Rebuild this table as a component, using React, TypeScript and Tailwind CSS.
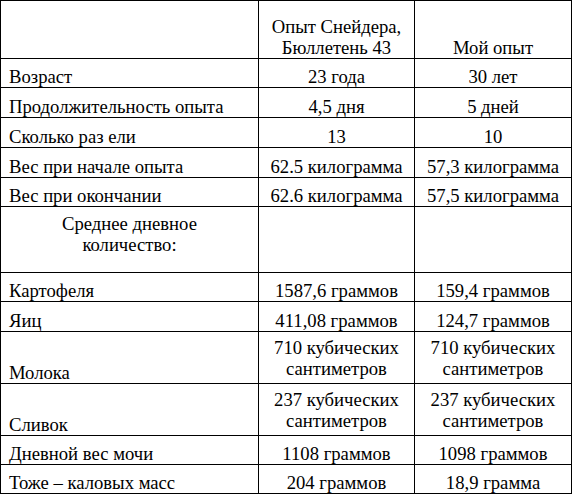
type R = { label: string; a: string[]; b: string[]; h: string; mid?: boolean };

const rows: R[] = [
  { label: "Возраст", a: ["23 года"], b: ["30 лет"], h: "h-[29px]" },
  { label: "Продолжительность опыта", a: ["4,5 дня"], b: ["5 дней"], h: "h-[30px]" },
  { label: "Сколько раз ели", a: ["13"], b: ["10"], h: "h-[30px]" },
  { label: "Вес при начале опыта", a: ["62.5 килограмма"], b: ["57,3 килограмма"], h: "h-[30px]" },
  { label: "Вес при окончании", a: ["62.6 килограмма"], b: ["57,5 килограмма"], h: "h-[29px]" },
];

const rows2: R[] = [
  { label: "Картофеля", a: ["1587,6 граммов"], b: ["159,4 граммов"], h: "h-[29px]" },
  { label: "Яиц", a: ["411,08 граммов"], b: ["124,7 граммов"], h: "h-[30px]" },
  { label: "Молока", a: ["710 кубических", "сантиметров"], b: ["710 кубических", "сантиметров"], h: "h-[52px]", mid: true },
  { label: "Сливок", a: ["237 кубических", "сантиметров"], b: ["237 кубических", "сантиметров"], h: "h-[52px]", mid: true },
  { label: "Дневной вес мочи", a: ["1108 граммов"], b: ["1098 граммов"], h: "h-[29px]" },
  { label: "Тоже – каловых масс", a: ["204 граммов"], b: ["18,9 грамма"], h: "h-[29px]" },
];

const cell = "border-r border-b border-black flex";

function Row({ r }: { r: R }) {
  const v = r.mid
    ? `${cell} ${r.h} flex-col justify-center items-center text-center`
    : `${cell} ${r.h} flex-col justify-end items-center text-center`;
  return (
    <>
      <div className={`${cell} ${r.h} items-end pl-2`}>{r.label}</div>
      <div className={v}>
        {r.a.map((t, i) => (
          <span key={i}>{t}</span>
        ))}
      </div>
      <div className={v}>
        {r.b.map((t, i) => (
          <span key={i}>{t}</span>
        ))}
      </div>
    </>
  );
}

export default function App() {
  return (
    <div
      className="w-[572px] h-[494px] bg-white text-black text-[18.67px] leading-[21px]"
      style={{ fontFamily: "'Liberation Serif', 'Times New Roman', serif" }}
    >
      <div className="grid grid-cols-[258px_156px_157px] border-t border-l border-black w-[572px]">
        <div className={`${cell} h-[58px]`} />
        <div className={`${cell} h-[58px] flex-col justify-end items-center text-center`}>
          <span>Опыт Снейдера,</span>
          <span>Бюллетень 43</span>
        </div>
        <div className={`${cell} h-[58px] flex-col justify-end items-center text-center`}>
          <span>Мой опыт</span>
        </div>

        {rows.map((r) => (
          <Row key={r.label} r={r} />
        ))}

        <div className={`${cell} h-[66px] flex-col justify-end items-center text-center pb-[17px]`}>
          <span>Среднее дневное</span>
          <span>количество:</span>
        </div>
        <div className={`${cell} h-[66px]`} />
        <div className={`${cell} h-[66px]`} />

        {rows2.map((r) => (
          <Row key={r.label} r={r} />
        ))}
      </div>
    </div>
  );
}
